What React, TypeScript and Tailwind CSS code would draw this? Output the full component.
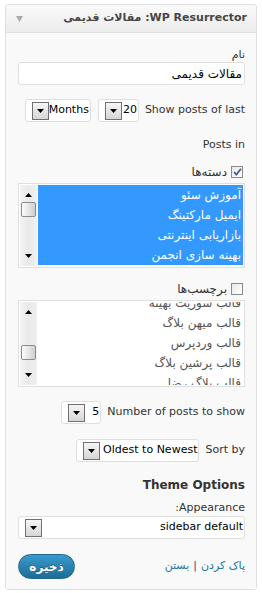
const font = "font-['DejaVu_Sans',sans-serif]";

const DropButton = () => (
  <span className="flex h-[18px] w-[17px] shrink-0 items-center justify-center border border-[#707070] bg-gradient-to-b from-[#f6f6f6] to-[#d6d6d6]">
    <svg width="7" height="4" viewBox="0 0 7 4">
      <path d="M0 0h7L3.5 4z" fill="#000" />
    </svg>
  </span>
);

const FakeSelect = ({ value, width }: { value: string; width: string }) => (
  <div
    className={`flex h-[23px] shrink-0 items-center justify-between rounded-[3px] border border-[#dfdfdf] bg-white pl-[6px] pr-[1px] text-[11px] text-black ${width}`}
  >
    <span>{value}</span>
    <DropButton />
  </div>
);

const CheckBox = ({ checked }: { checked?: boolean }) => (
  <span className="flex h-[12px] w-[12px] shrink-0 items-center justify-center border border-[#8a8a8a] bg-gradient-to-br from-[#e9e9e9] to-[#ffffff]">
    {checked && (
      <svg width="9" height="8" viewBox="0 0 9 8">
        <path d="M1 4l2.3 2.6L8 0.8" fill="none" stroke="#4a5d8f" strokeWidth="1.8" />
      </svg>
    )}
  </span>
);

const ScrollBar = ({ thumbTop }: { thumbTop: string }) => (
  <div className="relative w-[17px] shrink-0 bg-gradient-to-r from-[#f3f3f3] via-[#e9e9e9] to-[#f0f0f0]">
    <svg className="absolute left-[5px] top-[8px]" width="7" height="4" viewBox="0 0 7 4">
      <path d="M3.5 0L7 4H0z" fill="#000" />
    </svg>
    <div
      className={`absolute left-[1px] h-[15px] w-[15px] rounded-[2px] border border-[#8c8c8c] bg-gradient-to-r from-[#fdfdfd] to-[#cfcfcf] ${thumbTop}`}
    />
    <svg className="absolute bottom-[8px] left-[5px]" width="7" height="4" viewBox="0 0 7 4">
      <path d="M0 0h7L3.5 4z" fill="#000" />
    </svg>
  </div>
);

export default function App() {
  const cats = ["آموزش سئو", "ایمیل مارکتینگ", "بازاریابی اینترنتی", "بهینه سازی انجمن"];
  const tags = ["قالب سوریت بهینه", "قالب میهن بلاگ", "قالب وردپرس", "قالب پرشین بلاگ", "قالب بلاگ رضا"];

  return (
    <div dir="rtl" className={`min-h-[593px] w-[262px] bg-white px-[5px] pt-[4px] ${font}`}>
      <div className="w-[252px] rounded-[3px] border border-[#dfdfdf]">
        {/* header */}
        <div className="flex h-[28px] items-center justify-between rounded-t-[3px] border-b border-[#dfdfdf] bg-gradient-to-b from-[#f9f9f9] to-[#ececec] pl-[10px] pr-[9px]">
          <h4 className="text-[11px] font-bold text-[#464646]">WP Resurrector: مقالات قدیمی</h4>
          <svg width="7" height="6" viewBox="0 0 7 6">
            <path d="M0 0h7L3.5 6z" fill="#aaa" />
          </svg>
        </div>

        {/* body */}
        <div className="bg-[#f9f9f9] pb-[10px] pl-[12px] pr-[11px] pt-[15px] text-[11px] text-[#333]">
          <p className="leading-[14px]">نام</p>
          <div className="flex h-[23px] items-center rounded-[3px] border border-[#dfdfdf] bg-white px-[2px] text-[12px] text-black">
            مقالات قدیمی
          </div>

          <div className="mt-[14px] flex items-center">
            <span>Show posts of last</span>
            <span className="mr-[6px]"><FakeSelect value="20" width="w-[41px]" /></span>
            <span className="mr-[7px]"><FakeSelect value="Months" width="w-[66px]" /></span>
          </div>

          <p className="mt-[16px] leading-[14px]">Posts in</p>

          <div className="mt-[13px] flex h-[14px] items-center gap-[4px] pr-[2px]">
            <CheckBox checked />
            <span className="text-[12px]">دسته‌ها</span>
          </div>
          <div className="mt-[4px] flex h-[85px] border border-[#dfdfdf] bg-white p-[1px]">
            <div className="flex-1">
              {cats.map((c) => (
                <div key={c} className="flex h-[20px] items-center bg-[#3399ff] pr-[2px] text-[12px] text-white">
                  {c}
                </div>
              ))}
            </div>
            <div className="w-[1px]" />
            <ScrollBar thumbTop="top-[17px]" />
          </div>

          <div className="mt-[14px] flex h-[14px] items-center gap-[4px] pr-[2px]">
            <CheckBox />
            <span className="text-[12px]">برچسب‌ها</span>
          </div>
          <div className="mt-[4px] flex h-[87px] overflow-hidden border border-[#dfdfdf] bg-white p-[1px]">
            <div className="flex-1 overflow-hidden">
              <div className="mt-[-9px]">
                {tags.map((t) => (
                  <div key={t} className="flex h-[20px] items-center pr-[2px] text-[12px] text-[#555]">
                    {t}
                  </div>
                ))}
              </div>
            </div>
            <div className="w-[1px]" />
            <ScrollBar thumbTop="top-[43px]" />
          </div>

          <div className="mt-[14px] flex items-center">
            <span>Number of posts to show</span>
            <span className="mr-[6px]"><FakeSelect value="5" width="w-[40px]" /></span>
          </div>

          <div className="mt-[15px] flex items-center">
            <span>Sort by</span>
            <span className="mr-[6px]"><FakeSelect value="Oldest to Newest" width="w-[123px]" /></span>
          </div>

          <h3 className="mt-[15px] text-[12px] font-bold leading-[16px] text-[#333]">Theme Options</h3>
          <p className="mt-[8px] leading-[14px]">Appearance:</p>
          <div className="mt-[1px]">
            <FakeSelect value="sidebar default" width="w-full" />
          </div>

          <div className="mt-[15px] flex items-center justify-between">
            <div className="text-[11px]">
              <a className="text-[#21759b]">پاک کردن</a>
              <span className="mx-[4px] text-[#5a3a6a]">|</span>
              <a className="text-[#21759b]">بستن</a>
            </div>
            <button className="h-[25px] w-[57px] rounded-full border border-[#1f6a8c] bg-gradient-to-b from-[#3a9ad0] to-[#1d6c94] text-[12px] font-bold text-white [text-shadow:0_-1px_0_rgba(0,0,0,0.3)]">
              ذخیره
            </button>
          </div>
        </div>
      </div>
    </div>
  );
}
